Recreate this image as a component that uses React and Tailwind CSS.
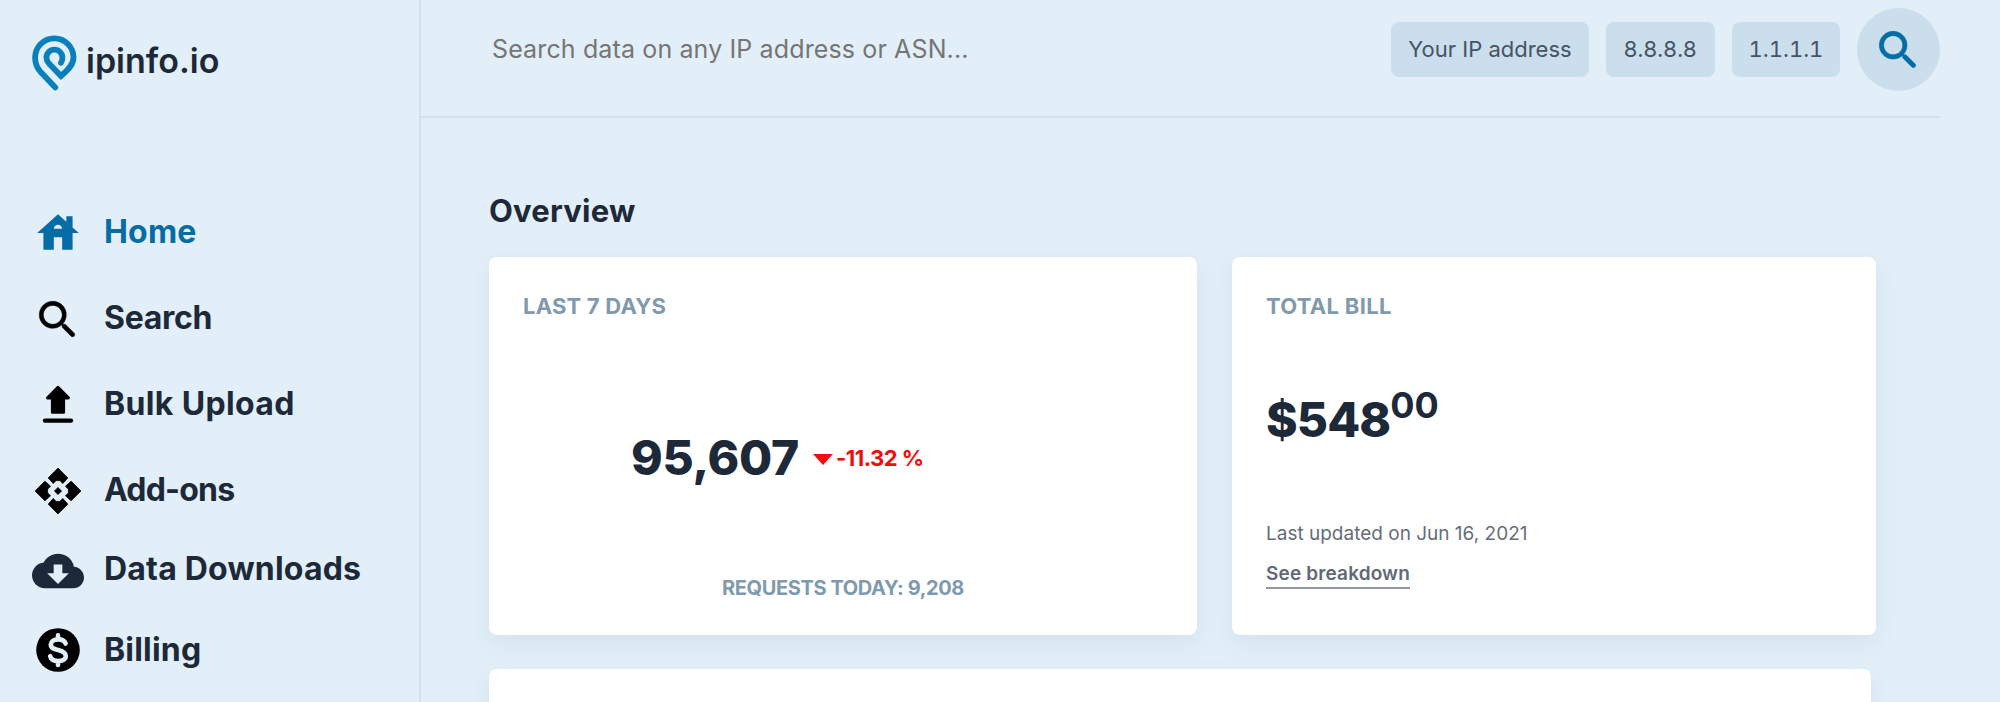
import { MdCloudDownload, MdHouse } from "react-icons/md";

function LogoMark() {
  return (
    <svg viewBox="32 35 45 56" className="h-14 w-[45px] shrink-0" fill="none">
      <path
        d="M55.3 87.4 40 71.2C36.6 67.3 35.1 62.8 35.1 57.6A19.2 19.2 0 0 1 73.5 57.6C73.5 65.2 67 71 61 76L49.2 63.8C47.3 61.6 46.4 59.8 46.4 57.6A8 8 0 0 1 62.4 57.6C62.4 59.6 62 61.4 61 62.8"
        stroke="#0a7fbd"
        strokeWidth="5.8"
        strokeLinecap="round"
      />
    </svg>
  );
}

function SearchIcon({ className }) {
  return (
    <svg viewBox="0 0 24 24" className={className} fill="currentColor" stroke="currentColor">
      <path d="M15.5 14h-.79l-.28-.27c1.2-1.4 1.82-3.31 1.48-5.34-.47-2.78-2.79-5-5.59-5.34-4.23-.52-7.79 3.04-7.27 7.27.34 2.8 2.56 5.12 5.34 5.59 2.03.34 3.94-.28 5.34-1.48l.27.28v.79l4.25 4.25c.41.41 1.08.41 1.49 0 .41-.41.41-1.08 0-1.49L15.5 14zm-6 0C7.01 14 5 11.99 5 9.5S7.01 5 9.5 5 14 7.01 14 9.5 11.99 14 9.5 14z" />
    </svg>
  );
}

function UploadIcon({ className }) {
  return (
    <svg viewBox="0 0 50 50" className={className} fill="currentColor" stroke="currentColor" strokeLinejoin="round">
      <path d="M25 8.4 35.4 18.9H30.6V33.3H19.4V18.9H14.6Z" strokeWidth="3" />
      <path d="M12 41.6H38" strokeWidth="4.4" strokeLinecap="round" />
    </svg>
  );
}

function AddonsIcon({ className }) {
  const arm = "M12 1 16.7 5.7 14.3 8.4 12.9 7H11.1L9.7 8.4 7.3 5.7Z";
  return (
    <svg viewBox="0 0 24 24" className={className} fill="currentColor" stroke="currentColor" strokeWidth="0.4" strokeLinejoin="round">
      <path d={arm} />
      <path d={arm} transform="rotate(90 12 12)" />
      <path d={arm} transform="rotate(180 12 12)" />
      <path d={arm} transform="rotate(270 12 12)" />
      <path d="M12 10.3 13.7 12 12 13.7 10.3 12Z" />
    </svg>
  );
}

function DollarIcon({ className }) {
  return (
    <svg viewBox="0 0 44 44" className={className} fill="none">
      <circle cx="22" cy="22" r="21.8" fill="#000" />
      <path
        d="M29.6 15.6C28.6 12.6 26 11.4 22.2 11.4 17.8 11.4 14.8 13.5 14.8 16.6 14.8 20 17.6 21 22 22 26.8 23.1 29.8 24.3 29.8 28 29.8 31.2 26.7 33 22.3 33 17.9 33 15 31.4 14.2 28.2M22 7.4V11M22 33.2V37"
        stroke="#e2eff8"
        strokeWidth="4.6"
        strokeLinecap="round"
      />
    </svg>
  );
}

const NAV = [
  { label: "Home", Icon: MdHouse, icon: "size-[50px] text-[#056ca6] mt-0.5", row: "h-[86px]", text: "text-[#056ca6] tracking-[0.2px]" },
  { label: "Search", Icon: SearchIcon, icon: "size-[50px] text-black mt-[3px] stroke-[0.2]", row: "h-[86px]", text: "tracking-[-0.3px]" },
  { label: "Bulk Upload", Icon: UploadIcon, icon: "size-[50px] text-black", row: "h-[86px]", text: "tracking-[0.35px]" },
  { label: "Add-ons", Icon: AddonsIcon, icon: "size-[50px] text-black mt-px", row: "h-[86px]", text: "tracking-[-0.8px]" },
  { label: "Data Downloads", Icon: MdCloudDownload, icon: "size-[52px] text-[#1d2939] mt-[3px]", row: "h-[72px]", text: "tracking-[0.2px]" },
  { label: "Billing", Icon: DollarIcon, icon: "size-11", row: "h-[90px]", text: "tracking-[0.2px]" },
];

function Sidebar() {
  return (
    <aside className="flex w-[421px] shrink-0 flex-col border-r-2 border-[#d0e0ee]">
      <div className="flex items-start pl-8 pt-[35px]">
        <LogoMark />
        <span className="ml-[9px] mt-[5px] text-[34px] font-semibold leading-[42px]">ipinfo.io</span>
      </div>
      <nav className="mt-[98px] flex flex-col pl-8">
        {NAV.map(({ label, Icon, icon, row, text }) => (
          <a key={label} className={`flex items-center ${row} ${text}`}>
            <span className="flex w-[52px] shrink-0 justify-center">
              <Icon className={icon} />
            </span>
            <span className="ml-5 text-[32px] font-bold leading-10">{label}</span>
          </a>
        ))}
      </nav>
    </aside>
  );
}

function Header() {
  return (
    <header className="mr-[60px] flex h-[118px] shrink-0 items-start border-b-2 border-[#cfe0ec] pt-2">
      <span className="ml-[71px] mt-[21px] text-[25px] leading-10 tracking-[0.13px] text-[#757575]">
        Search data on any IP address or ASN...
      </span>
      <div className="ml-auto flex items-center gap-[17px] text-[22px] text-[#465466]">
        <span className="flex h-[55px] w-[198px] items-center justify-center rounded-lg bg-[#cbdeeb]">Your IP address</span>
        <span className="flex h-[55px] w-[109px] items-center justify-center rounded-lg bg-[#cbdeeb] tracking-[0.4px]">8.8.8.8</span>
        <span className="flex h-[55px] w-[108px] items-center justify-center rounded-lg bg-[#cbdeeb] tabular-nums">1.1.1.1</span>
        <button className="flex size-[83px] items-center justify-center rounded-full bg-[#cbdeeb]">
          <SearchIcon className="mt-0.5 size-[51px] stroke-[0.3] text-[#056ca6]" />
        </button>
      </div>
    </header>
  );
}

const CARD = "rounded-lg bg-white shadow-[0_8px_24px_rgba(40,80,120,0.08)]";

function RequestsCard() {
  return (
    <section className={`${CARD} flex h-[378px] w-[708px] flex-col pt-[34px]`}>
      <h2 className="ml-[34px] text-[22px] font-bold leading-[30px] tracking-[0.2px] text-[#7f9aae]">LAST 7 DAYS</h2>
      <div className="ml-[142px] mt-[107px] flex h-[60px] items-center">
        <span className="text-[48px] font-extrabold leading-[60px] tracking-[-0.3px]">95,607</span>
        <svg viewBox="0 0 20 11" className="ml-[14px] mt-0.5 h-[11px] w-5" fill="#f40b0b">
          <path d="M0 0H20L10 11Z" />
        </svg>
        <span className="ml-[3px] text-[22px] font-bold leading-[30px] tracking-[-0.5px] text-[#f40b0b]">-11.32 %</span>
      </div>
      <p className="ml-[233px] mt-[85px] text-[20px] font-bold leading-[30px] tracking-[-0.38px] text-[#7f9aae]">REQUESTS TODAY: 9,208</p>
    </section>
  );
}

function BillCard() {
  return (
    <section className={`${CARD} flex h-[378px] w-[644px] flex-col items-start pl-[34px] pt-[34px]`}>
      <h2 className="text-[22px] font-bold leading-[30px] tracking-[0.3px] text-[#7f9aae]">TOTAL BILL</h2>
      <div className="mt-[69px] flex items-start">
        <span className="text-[48px] font-extrabold leading-[60px] tracking-[-0.9px]">$548</span>
        <span className="mt-[-5px] text-[36px] font-bold leading-[40px]">00</span>
      </div>
      <p className="mt-[69px] text-[19px] leading-[30px] text-[#666d79]">Last updated on Jun 16, 2021</p>
      <a className="mt-[12px] border-b-2 border-[#9297a3] text-[19px] font-semibold leading-[26px] tracking-[0.15px] text-[#626975]">See breakdown</a>
    </section>
  );
}

export default function App() {
  return (
    <div className="flex h-[702px] w-[2000px] overflow-hidden bg-[#e2eff8] font-['Inter',sans-serif] text-[#1d2939]">
      <Sidebar />
      <main className="flex min-w-0 flex-1 flex-col">
        <Header />
        <div className="pl-[68px] pt-[73px]">
          <h1 className="text-[31px] font-bold leading-10 tracking-[0.2px]">Overview</h1>
          <div className="mt-[26px] flex gap-[35px]">
            <RequestsCard />
            <BillCard />
          </div>
          <section className={`${CARD} mt-[34px] h-[200px] w-[1382px]`} />
        </div>
      </main>
    </div>
  );
}
